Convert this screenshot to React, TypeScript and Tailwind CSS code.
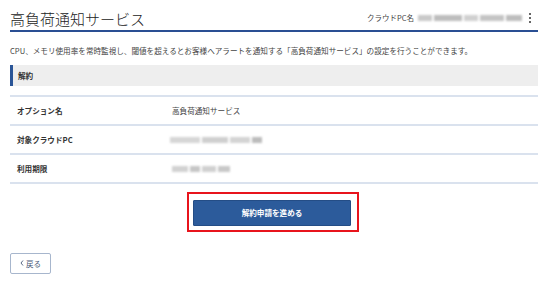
import React from "react";

function Blur({ segs, className = "" }: { segs: { w: number; c: string }[]; className?: string }) {
  return (
    <div className={"flex items-center gap-[2px] blur-[0.8px] " + className}>
      {segs.map((s, i) => (
        <div key={i} style={{ width: s.w, backgroundColor: s.c }} className="h-[6px]" />
      ))}
    </div>
  );
}

export default function App() {
  return (
    <div className="w-[550px] h-[283px] bg-white pl-[10px] pr-[12px] font-['Noto_Sans_CJK_JP','Noto_Sans',sans-serif] text-[#333]">
      {/* header */}
      <div className="flex items-center justify-between h-[32px] pt-[6px] border-b-2 border-[#2a4f93]">
        <h1 className="text-[15px] leading-none text-[#222] font-light">高負荷通知サービス</h1>
        <div className="flex items-center mr-[7px]">
          <span className="text-[7.5px] text-[#444]">クラウドPC名</span>
          <Blur
            className="ml-[4px]"
            segs={[
              { w: 14, c: "#c9c9c9" },
              { w: 28, c: "#bdbdbd" },
              { w: 14, c: "#d0d0d0" },
              { w: 24, c: "#c4c4c4" },
              { w: 16, c: "#bdbdbd" },
            ]}
          />
          <div className="ml-[7px] flex flex-col gap-[2px]">
            <div className="w-[2px] h-[2px] rounded-full bg-[#333]" />
            <div className="w-[2px] h-[2px] rounded-full bg-[#333]" />
            <div className="w-[2px] h-[2px] rounded-full bg-[#333]" />
          </div>
        </div>
      </div>

      {/* description */}
      <p className="mt-[13px] text-[7.6px] leading-[12px] text-[#444] whitespace-nowrap">
        CPU、メモリ使用率を常時監視し、閾値を超えるとお客様へアラートを通知する「高負荷通知サービス」の設定を行うことができます。
      </p>

      {/* section header */}
      <div className="mt-[8px] h-[21px] bg-[#eeeeee] border-l-[3px] border-[#2a5597] flex items-center pl-[5px]">
        <span className="text-[7.6px] font-bold text-[#333]">解約</span>
      </div>

      {/* table */}
      <div className="mt-[9px] border-t-2 border-[#dae2ee]">
        <div className="flex items-center h-[29px] border-b-2 border-[#dae2ee]">
          <div className="w-[155px] pl-[7px] text-[7.6px] font-bold">オプション名</div>
          <div className="pl-[7px] text-[7.6px] text-[#444]">高負荷通知サービス</div>
        </div>
        <div className="flex items-center h-[29px] border-b-2 border-[#dae2ee]">
          <div className="w-[155px] pl-[7px] text-[7.6px] font-bold">対象クラウドPC</div>
          <Blur
            className="ml-[5px]"
            segs={[
              { w: 30, c: "#d6d6d6" },
              { w: 26, c: "#cfcfcf" },
              { w: 20, c: "#d4d4d4" },
              { w: 10, c: "#bcbcbc" },
            ]}
          />
        </div>
        <div className="flex items-center h-[29px] border-b-2 border-[#dae2ee]">
          <div className="w-[155px] pl-[7px] text-[7.6px] font-bold">利用期限</div>
          <Blur
            className="ml-[7px]"
            segs={[
              { w: 16, c: "#d2d2d2" },
              { w: 10, c: "#c6c6c6" },
              { w: 14, c: "#d0d0d0" },
              { w: 12, c: "#c8c8c8" },
            ]}
          />
        </div>
      </div>

      {/* action */}
      <div className="mt-[8px] flex justify-center">
        <div className="ml-[-2px] border-[2.5px] border-[#e8141c] pl-[4px] pr-[6px] pt-[3px] pb-[4px]">
          <button className="w-[158px] h-[26px] bg-[#2c5b9b] border border-[#244d86] rounded-[1px] text-white text-[7.6px] font-bold">
            解約申請を進める
          </button>
        </div>
      </div>

      {/* back */}
      <div className="mt-[21px]">
        <button className="w-[41px] h-[21px] border border-[#a7b6cd] rounded-[2px] bg-white flex items-center justify-center gap-[2px] text-[7.5px] text-[#4a5a78]">
          <svg width="4" height="6" viewBox="0 0 4 6">
            <path d="M3 0.5 L1 3 L3 5.5" fill="none" stroke="#4a5a78" strokeWidth="0.9" />
          </svg>
          <span>戻る</span>
        </button>
      </div>
    </div>
  );
}
